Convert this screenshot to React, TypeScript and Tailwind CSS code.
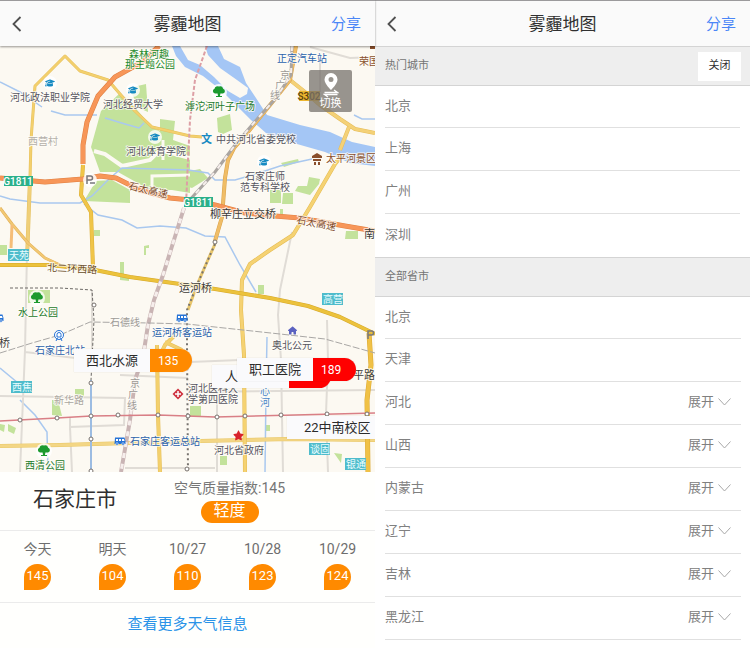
import { ReactNode, useState } from 'react';
import { FaGraduationCap, FaStar, FaHouse } from 'react-icons/fa6';

type Point = [number, number];

const hotCities = ['北京', '上海', '广州', '深圳'];

const provinces = [
  { name: '北京', expandable: false },
  { name: '天津', expandable: false },
  { name: '河北', expandable: true },
  { name: '山西', expandable: true },
  { name: '内蒙古', expandable: true },
  { name: '辽宁', expandable: true },
  { name: '吉林', expandable: true },
  { name: '黑龙江', expandable: true },
];

const forecast = [
  { day: '今天', aqi: 145 },
  { day: '明天', aqi: 104 },
  { day: '10/27', aqi: 110 },
  { day: '10/28', aqi: 123 },
  { day: '10/29', aqi: 124 },
];

const schools: Point[] = [[50, 83], [133, 90], [155, 137], [264, 162]];
const parks: Point[] = [[219, 92], [37, 298], [44, 451]];
const buses: Point[] = [[182, 318], [120, 441], [-2, 318]];

const metroStops: Point[] = [
  [20, 420], [57, 418], [91, 416], [118, 415], [158, 415], [188, 416], [217, 417], [245, 416],
  [281, 415], [327, 414], [367, 414], [91, 383], [91, 439], [91, 471], [94, 305], [215, 242], [187, 469],
];

const placeLabels = [
  { text: '河北政法职业学院', x: 10, y: 101, fill: '#55545f' },
  { text: '河北经贸大学', x: 103, y: 108, fill: '#55545f' },
  { text: '河北体育学院', x: 126, y: 155, fill: '#55545f' },
  { text: '中共河北省委党校', x: 216, y: 143, fill: '#55545f' },
  { text: '石家庄师', x: 245, y: 180, fill: '#55545f' },
  { text: '范专科学校', x: 240, y: 191, fill: '#55545f' },
  { text: '河北医科大', x: 188, y: 392, fill: '#55545f' },
  { text: '学第四医院', x: 188, y: 403, fill: '#55545f' },
  { text: '河北省政府', x: 214, y: 454, fill: '#55545f' },
  { text: '奥北公元', x: 272, y: 349, fill: '#55545f' },
  { text: '森林河趣', x: 129, y: 58, fill: '#1c8a2b' },
  { text: '那主题公园', x: 125, y: 68, fill: '#1c8a2b' },
  { text: '滹沱河叶子广场', x: 185, y: 110, fill: '#1c7a2b' },
  { text: '水上公园', x: 18, y: 316, fill: '#1c7a2b' },
  { text: '西清公园', x: 25, y: 469, fill: '#1c7a2b' },
  { text: '正定汽车站', x: 277, y: 62, fill: '#2a62ac' },
  { text: '石家庄北站', x: 35, y: 354, fill: '#2a62ac' },
  { text: '运河桥客运站', x: 152, y: 336, fill: '#2a62ac' },
  { text: '石家庄客运总站', x: 130, y: 445, fill: '#2a62ac' },
  { text: '心', x: 260, y: 395, fill: '#4a86c6' },
  { text: '河', x: 260, y: 406, fill: '#4a86c6' },
  { text: '荣国', x: 359, y: 65, fill: '#8a4f2c' },
  { text: '太平河景区', x: 326, y: 162, fill: '#8a4f2c' },
  { text: '西营村', x: 28, y: 145, fill: '#b4b0aa' },
  { text: '新华路', x: 54, y: 404, fill: '#aaa6a0' },
  { text: '石德线', x: 110, y: 326, fill: '#9d9a96' },
];

const bridgeLabels = [
  { text: '柳辛庄立交桥', x: 210, y: 218 },
  { text: '运河桥', x: 179, y: 292 },
  { text: '南', x: 364, y: 238 },
  { text: '桥', x: -1, y: 347 },
  { text: '平路', x: 353, y: 379 },
];

const districts = [
  { text: '天苑', x: 8, y: 249 },
  { text: '西焦', x: 11, y: 381 },
  { text: '高营', x: 322, y: 293 },
  { text: '谈固', x: 309, y: 443 },
  { text: '银通', x: 345, y: 458 },
];

const stations = [
  { name: '西北水源', aqi: '135', place: 'left-[74px] top-[303px]', label: 'w-[76px] pl-[12px]', chip: 'w-[42px] bg-[#ff8a00]' },
  { name: '人', aqi: '', place: 'left-[212px] top-[319px]', label: 'w-[77px] pl-[13px]', chip: 'w-[42px] bg-[#ff0000]' },
  { name: '职工医院', aqi: '189', place: 'left-[237px] top-[312px]', label: 'w-[76px] pl-[12px]', chip: 'w-[43px] bg-[#ff0000]' },
  { name: '22中南校区', aqi: '', place: 'left-[287px] top-[370px]', label: 'w-[90px] pl-[17px]', chip: 'w-[42px] bg-[#ff0000]' },
];

function Road({ d, color, width, edge }: { d: string; color: string; width: number; edge?: string }) {
  return (
    <>
      {edge && <path d={d} stroke={edge} strokeWidth={width + 1} />}
      <path d={d} stroke={color} strokeWidth={width} />
    </>
  );
}

function Railway({ d, color, width = 3 }: { d: string; color: string; width?: number }) {
  return (
    <>
      <path d={d} stroke={color} strokeWidth={width} />
      <path d={d} stroke="#f6eeec" strokeWidth={width - 1} strokeDasharray="5 6" />
    </>
  );
}

function TreeMark({ x, y }: { x: number; y: number }) {
  return (
    <g transform={`translate(${x} ${y})`}>
      <circle r="8" fill="#fff" fillOpacity=".8" />
      <path
        d="M-4 1.500a2.500 2.500 0 0 1-.5-4.800A3.300 3.300 0 0 1 0-5.500a3.300 3.300 0 0 1 4.200 2.200A2.500 2.500 0 0 1 4 1.500H1.400L1 4h2v1h-6V4h2l-.4-2.500z"
        fill="#1c9a2e"
      />
    </g>
  );
}

function CityMap() {
  return (
    <svg
      className="block h-[426px] w-full"
      viewBox="0 46 375 426"
      preserveAspectRatio="xMidYMid slice"
      role="img"
      aria-label="石家庄地图"
    >
      <rect x="0" y="46" width="375" height="426" fill="#fcf9f2" />

      {/* green areas */}
      <g fill="#c3e29b">
        <path d="M101 111L120 93L131 103L152 127L160 131V119L175 121L173 140L190 146V193L172 190L150 190L118 172L100 172L91 147Z" />
        <path d="M129 88L146 84L148 112L139 108Z" />
        <path d="M96 181L112 180L130 190V203L84 201Z" />
        <path d="M185 172L200 169L208 178L192 188L185 186Z" />
        <path d="M217 118L230 114L232 130L223 134L218 132Z" />
        <path d="M309 177L320 179L319 184L310 195L295 191L298 186L307 186Z" />
        <path d="M270 190H281V203H270ZM283 193H293V204H282ZM346 231H358V239H345ZM258 285H264V294H258ZM94 230H100V236H94ZM120 262H124V274L129 276V281L120 280ZM0 245H7V255H0ZM28 290H50V303H28ZM75 389H84V397L75 394ZM52 400H58L62 416L52 415ZM190 406H201V416H190ZM265 425H270V431H265ZM334 453L342 454L341 463ZM220 456H227V465H220ZM144 246L149 245V248H146V255H144ZM280 209H283V216H280Z" />
        <path d="M0 424L5 425L4 432L0 430ZM8 424L16 428L14 434L8 431ZM281 163L298 159L299 162L284 167Z" />
      </g>
      <g fill="none" stroke="#fcf9f2" strokeWidth="4">
        <path d="M94 151L105 154L122 166L150 160L160 150L190 158" />
        <path d="M152 190V176L190 175M163 140V160" strokeWidth="3" />
      </g>

      {/* rivers */}
      <path
        d="M172 46H218L224 59L240 67L246 83L256 98L267 115L300 125L330 132L352 142L375 147V166L350 163L325 152L290 142L266 133L251 120L238 107L222 91L203 76L185 67L176 56Z"
        fill="#a4c6f5"
      />
      <path d="M180 46H205L208 55L220 68L237 80L248 88L247 94L240 98L228 91L214 77L200 65L188 60Z" fill="#fcf9f2" />
      <g fill="none" stroke="#a9c8ef" strokeWidth="1.500">
        <path d="M0 82L20 92L42 107M51 111L65 115L97 115M105 118L125 124L139 128L144 123" />
        <path d="M0 196L10 199L40 203L80 203L92 196L110 178L122 168L190 170" />
        <path d="M84 204L98 215L122 220L137 228L160 226L186 228L205 236L225 237L240 265L256 292" />
        <path d="M188 170L208 173L215 180L235 180L256 174L280 166L312 159M352 160L375 158M354 115L362 119L375 119" />
        <path d="M20 400L35 415L47 432L48 472M267 337L266 390L265 472M0 368L18 383" />
      </g>

      {/* minor streets */}
      <g fill="none" stroke="#e0dcd6" strokeWidth="2">
        <path d="M27 252L25 350L20 472M25 352L92 360M0 396L125 398L124 425L70 427L72 472M70 418V430" />
        <path d="M292 232L280 290L278 315L281 360L283 472M327 320L328 360L326 414L328 472M217 375V472M92 290V360" />
        <path d="M120 375L188 378M190 362L240 360M188 392L375 390M312 97L320 100M320 60V92M310 47L350 58L375 57M125 468H215" />
      </g>

      {/* main roads */}
      <g fill="none" strokeLinejoin="round">
        <Road d="M30 178L31 140L35 86L65 56L80 71L108 80L120 94L135 111L152 127L190 136L202 137" color="#f3d06d" edge="#e6bf5c" width={2} />
        <Road d="M30 178L27 260" color="#f0cf78" edge="#e4c163" width={3} />
        <Road d="M0 208L12 224L28 243L45 258L60 265" color="#f2c873" edge="#e0ae55" width={2} />
        <Road d="M12 225L11 248" color="#f5bd78" width={3} />
        <Road d="M0 446L60 445L130 443L200 441L290 439L375 440" color="#f3d685" edge="#e8c767" width={3} />
        <Road d="M157 345L158 415L160 472M157 362L165 345L175 335M165 342L182 350" color="#f3d06d" edge="#e6bf5c" width={3} />
        <Road d="M342 155L335 164L310 207L293 235L270 250L250 264L242 280L241 310L244 355L245 472" color="#f5d272" edge="#e4bb52" width={3} />
        <Road d="M290 80L305 92L320 105L340 119L355 129L375 133M349 127L340 150" color="#f4d177" edge="#e6bd5a" width={3} />
        <Road d="M296 46L290 80L270 105L248 132L234 148L228 160L225 178L222 217L215 241" color="#f0bd66" edge="#d9a24c" width={3} />
        <Road d="M215 244L207 262L197 285L188 310" color="#e8c66c" width={3} />
        <path d="M215 244L207 262L197 285L187 310L187 345L188 472" stroke="#77736f" strokeWidth="2" strokeDasharray="2 3" />
        <Road d="M369 333L371 365L367 400L368 472" color="#f0c146" edge="#dca933" width={4} />
        <Road d="M0 265L50 265L95 270L130 277L180 284L215 289L270 298L308 306L340 317L375 334" color="#ecc23c" edge="#d5a82b" width={3} />
        <Road d="M83 165L81 195L91 212L93 268" color="#f0c548" edge="#dbae37" width={3} />
        <Road d="M159 46L142 62L115 77L98 96L87 122L83 145L83 164" color="#f79658" edge="#e08043" width={4} />
        <Road d="M0 178L45 182L83 179L100 176L116 178L140 190L170 198L190 200L215 205L245 213L275 216L300 218L345 226L375 231" color="#f79658" edge="#e08043" width={4} />
      </g>

      {/* railways and metro */}
      <g fill="none">
        <Railway d="M184 208L173 243L163 275L154 300L148 325L143 357L135 380L130 420L121 472" color="#c9b4b4" width={4} />
        <path d="M207 46L195 80L190 120L188 160L186 205" stroke="#dd9fa5" strokeWidth="2" strokeDasharray="4 2" />
        <Railway d="M292 46L291 75L276 98L258 118L235 145L215 172L186 204" color="#aaa5a1" />
        <path d="M0 353L32 343L60 335L90 322L150 323L187 324L280 334L325 339L375 353" stroke="#a9a7a5" strokeWidth="1" strokeDasharray="7 2" />
        <path d="M10 288L60 288L92 290L94 320L91 380" stroke="#6c6966" strokeWidth="1" strokeDasharray="3 2" />
        <path d="M91 380V472" stroke="#9cbce2" strokeWidth="2" />
        <path d="M0 421L57 418L91 416L158 415L215 417L375 413" stroke="#d97f86" strokeWidth="1.500" />
        {metroStops.map(([x, y]) => (
          <circle key={`${x}-${y}`} cx={x} cy={y} r="2" fill="#fff" stroke="#77716d" strokeWidth="1" />
        ))}
      </g>

      {/* points of interest */}
      {schools.map(([x, y]) => (
        <g key={`${x}-${y}`}>
          <circle cx={x} cy={y} r="7" fill="#fff" fillOpacity=".8" />
          <FaGraduationCap x={x - 5} y={y - 5} size={10} color="#168ac2" />
        </g>
      ))}
      {parks.map(([x, y]) => (
        <TreeMark key={`${x}-${y}`} x={x} y={y} />
      ))}
      {buses.map(([x, y]) => (
        <g key={`${x}-${y}`} transform={`translate(${x} ${y})`}>
          <path d="M-5-3.500h9.500L5.500 0v3h-11z" fill="#2673d6" />
          <path d="M-4-2h2v2h-2zM-1-2h2v2h-2zM2-2h2l.6 2H2z" fill="#fff" />
          <circle cx="-3" cy="3" r="1.300" fill="#2673d6" stroke="#fff" strokeWidth=".5" />
          <circle cx="3" cy="3" r="1.300" fill="#2673d6" stroke="#fff" strokeWidth=".5" />
        </g>
      ))}
      <FaStar x="233" y="430" size={11} color="#d8232b" />
      <FaHouse x="288" y="326" size={9} color="#5b62c0" />
      <g fill="none" stroke="#2673d6">
        <circle cx="59" cy="335" r="4.500" fill="#fff" />
        <path d="M57 337V334.500a2 2 0 0 1 4 0V337ZM56 341L57.500 338M62 341L60.500 338" />
      </g>
      <path d="M178 388.500L183.500 394L178 399.500L172.500 394Z" fill="#cf3340" />
      <path d="M178 391V397M175 394H181" stroke="#fff" strokeWidth="1.500" />
      <g fill="#8a4f2c">
        <path d="M312 156L317 153L322 156V158H312ZM313 159H321V161H313ZM314 162H316V165H314ZM318 162H320V165H318Z" />
        <path d="M370 46H375V49H370Z" />
      </g>
      <text x="201" y="143" fontSize="11" fontWeight="700" fill="#168ac2">文</text>
      <g fill="none" stroke="#77777c" strokeWidth="1.500">
        <circle cx="90" cy="180" r="7" fill="#fff" fillOpacity=".85" stroke="none" />
        <path d="M87 184V176H90.500a2 2 0 0 1 0 4H87M90 183H95" />
        <path d="M368 339V331H371.500a2 2 0 0 1 0 4H368" />
      </g>

      {/* names */}
      <g fontSize="10" stroke="#fffdf8" strokeWidth="2" strokeOpacity=".8" paintOrder="stroke" strokeLinejoin="round">
        {placeLabels.map((label) => (
          <text key={label.text} x={label.x} y={label.y} fill={label.fill}>
            {label.text}
          </text>
        ))}
        <g fontSize="11" fill="#3c3a38">
          {bridgeLabels.map((label) => (
            <text key={label.text} x={label.x} y={label.y}>
              {label.text}
            </text>
          ))}
        </g>
        <text transform="translate(128 189) rotate(13)" fill="#7d4a2c">石太高速</text>
        <text transform="translate(296 223) rotate(11)" fill="#7d4a2c">石太高速</text>
        <text transform="translate(47 271) rotate(3)" fill="#6b4d28">北二环西路</text>
        <g fill="#9d9a96">
          <text x="280" y="79">京</text>
          <text x="275" y="89">广</text>
          <text x="270" y="99">线</text>
          <text x="130" y="387">京</text>
          <text x="128" y="398">广</text>
          <text x="127" y="409">线</text>
        </g>
      </g>
      {districts.map((d) => (
        <g key={d.text}>
          <rect x={d.x} y={d.y} width="21" height="12" fill="#4fbccb" />
          <text x={d.x + 1} y={d.y + 10} fontSize="10" fill="#eafcff">{d.text}</text>
        </g>
      ))}
      <g fontSize="10" fontWeight="500" textAnchor="middle">
        <rect x="4" y="176" width="29" height="10" fill="#2bb08a" />
        <text x="18" y="185" fill="#fff">G1811</text>
        <rect x="184" y="197" width="29" height="10" fill="#2bb08a" />
        <text x="198" y="206" fill="#fff">G1811</text>
        <rect x="299" y="91" width="21" height="10" fill="#edb62e" />
        <text x="309" y="100" fill="#5c4210">S302</text>
      </g>
    </svg>
  );
}

function TopBar() {
  return (
    <header className="grid h-[46px] grid-cols-3 items-center border-t border-[#9b9a9c] bg-[#fafafa] px-3">
      <button type="button" aria-label="返回" className="justify-self-start">
        <svg width="10" height="16" viewBox="0 0 10 16" fill="none" stroke="#505050" strokeWidth="1.800">
          <path d="M8.500 1L1.500 8L8.500 15" />
        </svg>
      </button>
      <h1 className="justify-self-center text-[17px] leading-6 text-[#303030]">雾霾地图</h1>
      <button type="button" className="justify-self-end pr-0.5 text-[15px] leading-6 text-[#4a86f7]">分享</button>
    </header>
  );
}

function MapScreen() {
  return (
    <section className="min-w-0 flex-1 bg-[#fffffd]">
      <div className="relative z-10 shadow-[0_1px_2px_rgba(0,0,0,0.4)]">
        <TopBar />
      </div>

      <div className="relative overflow-hidden">
        <CityMap />
        {stations.map((s) => (
          <button
            key={s.name}
            type="button"
            className={`absolute flex h-[23px] items-center whitespace-nowrap rounded-tl-2xl rounded-bl-sm rounded-r-full bg-[#fafafc] text-[13px] leading-5 text-[#2b2b2b] shadow-[0_0_1px_rgba(0,0,0,0.25)] ${s.place}`}
          >
            <span className={`text-left ${s.label}`}>{s.name}</span>
            <span className={`flex h-full items-center rounded-r-full pl-2 text-[12px] text-white ${s.chip}`}>
              {s.aqi}
            </span>
          </button>
        ))}
        <button
          type="button"
          className="absolute top-6 right-[23px] flex h-[42px] w-[43px] flex-col items-center rounded-xs bg-[#77716c]/75 pt-[3px] text-[11px] leading-3 text-white"
        >
          <svg width="16" height="25" viewBox="0 0 16 25" fill="#fff" aria-hidden="true">
            <path fillRule="evenodd" d="M8 0a6.500 6.500 0 0 0-6.500 6.500C1.500 11 8 17 8 17s6.500-6 6.500-10.500A6.500 6.500 0 0 0 8 0zm0 4a2.500 2.500 0 1 1 0 5 2.500 2.500 0 0 1 0-5z" />
            <path d="M1.500 19.500h13l-3.500-2.500M14.500 21.500h-13l3.500 2.500" fill="none" stroke="#fff" strokeWidth="1.300" />
          </svg>
          切换
        </button>
      </div>

      <div className="flex h-[59px] border-b border-[#ebebeb]">
        <h2 className="flex w-2/5 items-center justify-center pb-1 text-[21px] leading-8 text-[#303030]">石家庄市</h2>
        <div className="flex flex-col items-center pt-[6px] pl-6">
          <p className="text-[14px] leading-5 text-[#757575]">空气质量指数:145</p>
          <span className="mt-[3px] flex h-[22px] w-[58px] items-center justify-center rounded-full bg-[#ff8a00] pb-0.5 text-[16px] leading-5 text-white">
            轻度
          </span>
        </div>
      </div>

      <ul className="grid h-[72px] grid-cols-5 border-b border-[#ebebeb] pt-2">
        {forecast.map((f) => (
          <li key={f.day} className="flex flex-col items-center">
            <span className="text-[14px] leading-5 text-[#6e6e6e]">{f.day}</span>
            <span className="mt-[5px] flex h-[26px] w-[27px] items-center justify-center rounded-full rounded-bl-none bg-[#ff8a00] pb-0.5 text-[13px] leading-5 text-white">
              {f.aqi}
            </span>
          </li>
        ))}
      </ul>

      <a href="#weather" className="block pt-[9px] pb-3 text-center text-[15px] leading-6 text-[#2a93e8]">
        查看更多天气信息
      </a>
    </section>
  );
}

function SectionTitle({ title, children }: { title: string; children?: ReactNode }) {
  return (
    <div className="flex h-10 items-center justify-between border-y border-[#d4d4d4] bg-[#eeeeee] pr-[9px] pl-[10px]">
      <h2 className="text-[11px] leading-4 text-[#747474]">{title}</h2>
      {children}
    </div>
  );
}

function CityListScreen() {
  const [opened, setOpened] = useState<string | null>(null);

  return (
    <section className="min-w-0 flex-1 bg-white text-[13px] leading-5 text-[#808080]">
      <TopBar />
      <SectionTitle title="热门城市">
        <button type="button" className="h-[29px] w-[43px] bg-white text-[11px] leading-4 text-[#303030]">关闭</button>
      </SectionTitle>
      <ul className="px-[10px]">
        {hotCities.map((city) => (
          <li key={city} className="flex h-[43px] items-center border-b border-[#e0e0e0] pb-0.5 first:h-[42px] last:border-b-0">
            {city}
          </li>
        ))}
      </ul>

      <SectionTitle title="全部省市" />
      <ul className="pr-[9px] pl-[10px]">
        {provinces.map((p) => (
          <li key={p.name} className="flex h-[43px] items-center justify-between border-b border-[#e0e0e0] pb-0.5 first:h-[42px]">
            {p.name}
            {p.expandable && (
              <button
                type="button"
                aria-expanded={opened === p.name}
                onClick={() => setOpened(opened === p.name ? null : p.name)}
                className="flex items-center gap-1 pr-[10px]"
              >
                展开
                <svg width="13" height="8" viewBox="0 0 13 8" fill="none" stroke="#a8a8a8" aria-hidden="true">
                  <path d="M.5.5L6.500 7L12.500.5" />
                </svg>
              </button>
            )}
          </li>
        ))}
      </ul>
    </section>
  );
}

export default function App() {
  return (
    <main className="flex items-stretch bg-white font-[Roboto,'Noto_Sans_CJK_SC',sans-serif]">
      <MapScreen />
      <CityListScreen />
    </main>
  );
}
